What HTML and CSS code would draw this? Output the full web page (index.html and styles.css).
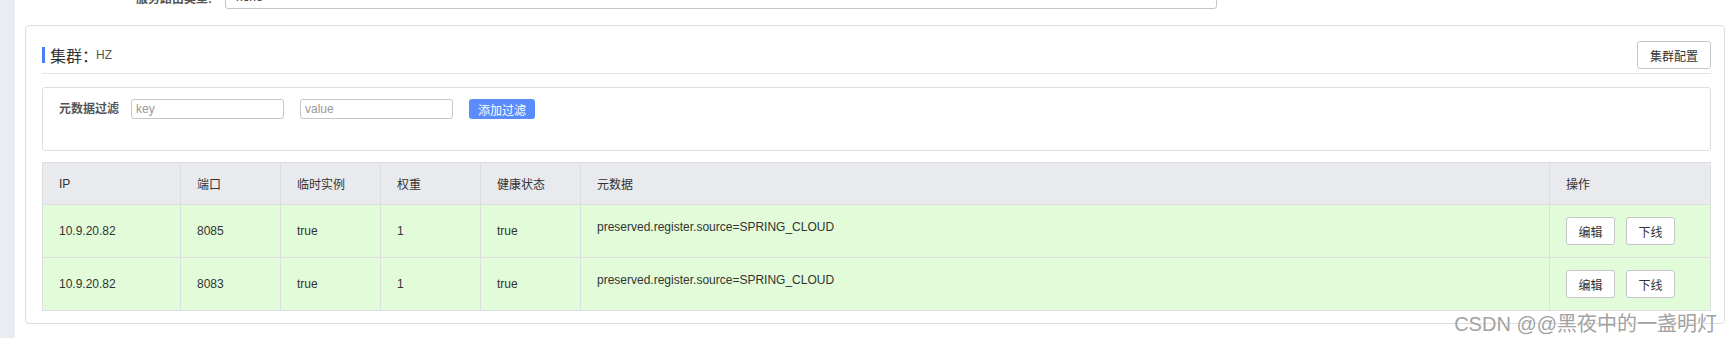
FILE: index.html
```html
<!DOCTYPE html>
<html lang="zh-CN">
<head>
    <meta charset="UTF-8">
    <meta name="viewport" content="width=device-width, initial-scale=1.0">
    <title>服务详情</title>
    <link rel="stylesheet" href="styles.css">
</head>
<body>
    <div class="side"></div>

    <div class="main">
        <div class="form-row">
            <label class="form-label">服务路由类型:</label>
            <div class="form-input">none</div>
        </div>

        <div class="card">
            <div class="card-head">
                <div class="card-title">
                    <span class="title-bar"></span>
                    <span class="title-text">集群：</span>
                    <span class="title-name">HZ</span>
                </div>
                <button class="btn">集群配置</button>
            </div>

            <div class="filter-box">
                <span class="filter-label">元数据过滤</span>
                <input class="filter-input" type="text" placeholder="key">
                <input class="filter-input" type="text" placeholder="value">
                <button class="btn-primary">添加过滤</button>
            </div>

            <table class="instance-table">
                <colgroup>
                    <col class="col-ip">
                    <col class="col-small">
                    <col class="col-small">
                    <col class="col-small">
                    <col class="col-small">
                    <col>
                    <col class="col-ops">
                </colgroup>
                <thead>
                    <tr>
                        <th>IP</th>
                        <th>端口</th>
                        <th>临时实例</th>
                        <th>权重</th>
                        <th>健康状态</th>
                        <th>元数据</th>
                        <th>操作</th>
                    </tr>
                </thead>
                <tbody>
                    <tr>
                        <td>10.9.20.82</td>
                        <td>8085</td>
                        <td>true</td>
                        <td>1</td>
                        <td>true</td>
                        <td class="meta">preserved.register.source=SPRING_CLOUD</td>
                        <td><button class="btn btn-sm">编辑</button><button class="btn btn-sm">下线</button></td>
                    </tr>
                    <tr>
                        <td>10.9.20.82</td>
                        <td>8083</td>
                        <td>true</td>
                        <td>1</td>
                        <td>true</td>
                        <td class="meta">preserved.register.source=SPRING_CLOUD</td>
                        <td><button class="btn btn-sm">编辑</button><button class="btn btn-sm">下线</button></td>
                    </tr>
                </tbody>
            </table>
        </div>

        <div class="watermark">CSDN @@黑夜中的一盏明灯</div>
    </div>
</body>
</html>
```

FILE: styles.css
```css
body {
    margin: 0;
    padding: 0;
    display: flex;
    min-height: 338px;
    background-color: #ffffff;
    color: #333;
    font-family: "Liberation Sans", "Noto Sans CJK SC", sans-serif;
    font-size: 12px;
    overflow: hidden;
}

.side {
    width: 15px;
    flex-shrink: 0;
    background-color: #e9ecf0;
}

.main {
    flex: 1;
    position: relative;
}

.form-row {
    display: flex;
    align-items: center;
    margin-top: -15px;
    height: 24px;
}

.form-label {
    width: 197px;
    text-align: right;
    font-weight: bold;
    color: #555;
    margin-right: 13px;
}

.form-input {
    width: 970px;
    height: 22px;
    line-height: 22px;
    padding: 0 10px;
    border: 1px solid #c4c6cc;
    border-radius: 3px;
    color: #333;
}

.card {
    margin: 16px 8px 0 10px;
    border: 1px solid #dcdee2;
    border-radius: 4px;
    padding: 15px 13px 12px 16px;
}

.card-head {
    display: flex;
    justify-content: space-between;
    align-items: center;
    padding-bottom: 4px;
    border-bottom: 1px solid #e3e4e8;
}

.card-title {
    display: flex;
    align-items: center;
}

.title-bar {
    width: 3px;
    height: 16px;
    background-color: #4e7dfc;
    margin-right: 5px;
}

.title-text {
    font-size: 16px;
    color: #333;
}

.title-name {
    font-size: 12px;
    color: #555;
    margin-left: -2px;
}

.btn {
    height: 28px;
    padding: 0 12px;
    background-color: #fff;
    border: 1px solid #c4c6cc;
    border-radius: 3px;
    font-family: inherit;
    font-size: 12px;
    color: #333;
    cursor: pointer;
}

.filter-box {
    margin-top: 13px;
    height: 64px;
    box-sizing: border-box;
    border: 1px solid #dcdee2;
    border-radius: 3px;
    padding: 11px 16px;
    display: flex;
    align-items: flex-start;
}

.filter-label {
    line-height: 20px;
    font-weight: bold;
    color: #555;
    margin-right: 12px;
}

.filter-input {
    width: 153px;
    height: 20px;
    box-sizing: border-box;
    border: 1px solid #c4c6cc;
    border-radius: 3px;
    padding: 0 4px;
    margin: 0 16px 0 0;
    font-family: inherit;
    font-size: 12px;
    color: #333;
}

.filter-input::placeholder {
    color: #999;
}

.btn-primary {
    width: 66px;
    height: 20px;
    padding: 0;
    border: none;
    border-radius: 3px;
    background-color: #5b8cfd;
    color: #fff;
    font-family: inherit;
    font-size: 12px;
    cursor: pointer;
}

.instance-table {
    margin-top: 11px;
    width: 100%;
    table-layout: fixed;
    border-collapse: separate;
    border-spacing: 0;
    border-top: 1px solid #dcdee2;
    border-left: 1px solid #dcdee2;
}

.col-ip {
    width: 138px;
}

.col-small {
    width: 100px;
}

.col-ops {
    width: 161px;
}

.instance-table th,
.instance-table td {
    box-sizing: border-box;
    border-right: 1px solid #dcdee2;
    border-bottom: 1px solid #dcdee2;
    padding: 0 16px;
    text-align: left;
    font-weight: normal;
    color: #333;
}

.instance-table th {
    height: 42px;
    background-color: #e9eaee;
}

.instance-table td {
    height: 53px;
    background-color: #e2fbd9;
}

.instance-table td.meta {
    vertical-align: top;
    padding-top: 13px;
    line-height: 18px;
}

.btn-sm {
    width: 49px;
    height: 28px;
    padding: 0;
    margin-right: 11px;
}

.watermark {
    position: absolute;
    right: 16px;
    top: 308px;
    font-size: 20px;
    color: #a2a2a2;
    text-shadow: 0 0 2px #fff;
    white-space: nowrap;
}
```
